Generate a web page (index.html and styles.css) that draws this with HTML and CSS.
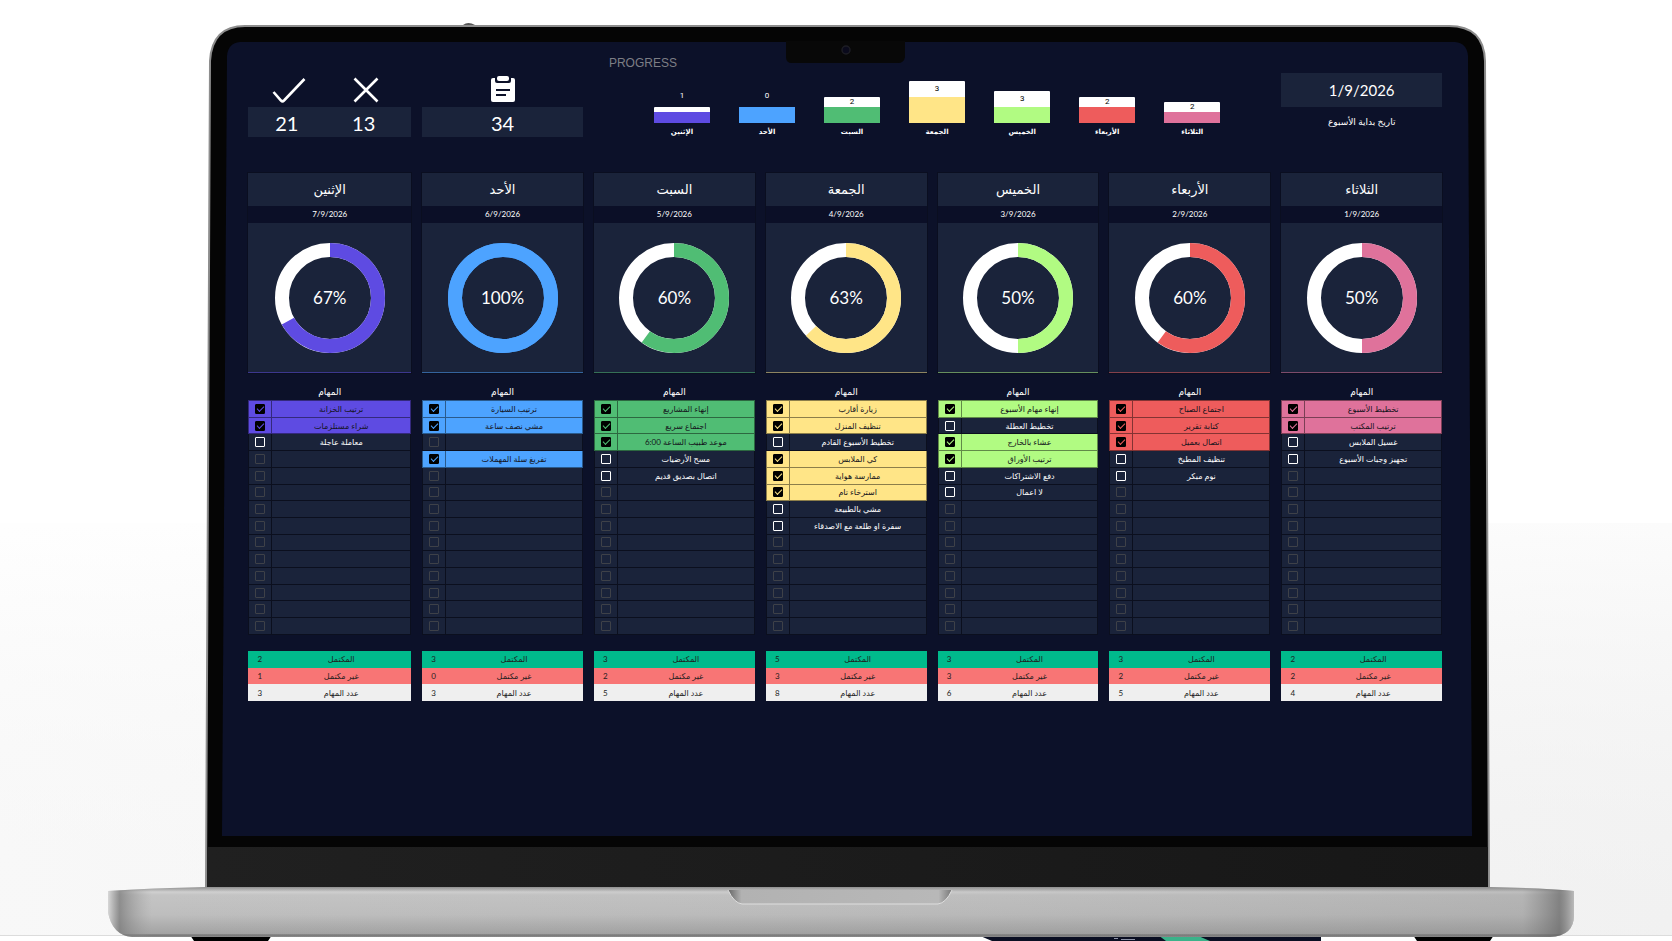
FILE: index.html
```html
<!DOCTYPE html>
<html lang="ar">
<head>
    <meta charset="UTF-8">
    <meta name="viewport" content="width=device-width, initial-scale=1.0">
    <title>Weekly tasks</title>
    <link rel="stylesheet" href="styles.css">
</head>
<body>
    <div class="scene">
        <!-- laptop -->
        <svg class="laptop" viewBox="0 0 1672 941" preserveAspectRatio="none" aria-hidden="true">
            <defs>
                <linearGradient id="wall" x1="0" y1="0" x2="1" y2="0">
                    <stop offset="0" stop-color="#fdfdfd"/>
                    <stop offset="1" stop-color="#f3f3f3"/>
                </linearGradient>
                <linearGradient id="shade" x1="0" y1="0" x2="0" y2="1">
                    <stop offset="0" stop-color="#fff" stop-opacity="0.7"/>
                    <stop offset="1" stop-color="#ececec" stop-opacity="0.3"/>
                </linearGradient>
                <linearGradient id="base" x1="0" y1="0" x2="0" y2="1">
                    <stop offset="0" stop-color="#8f8f8f"/>
                    <stop offset="0.1" stop-color="#d0d0d0"/>
                    <stop offset="0.16" stop-color="#c4c4c4"/>
                    <stop offset="0.55" stop-color="#bebebe"/>
                    <stop offset="0.93" stop-color="#a3a3a3"/>
                    <stop offset="0.96" stop-color="#777"/>
                    <stop offset="1" stop-color="#8c8c8c"/>
                </linearGradient>
                <linearGradient id="ends" x1="0" y1="0" x2="1" y2="0">
                    <stop offset="0" stop-color="#ddd" stop-opacity="0.8"/>
                    <stop offset="0.008" stop-color="#777" stop-opacity="0.7"/>
                    <stop offset="0.03" stop-color="#999" stop-opacity="0"/>
                    <stop offset="0.6" stop-color="#888" stop-opacity="0.1"/>
                    <stop offset="0.965" stop-color="#777" stop-opacity="0.2"/>
                    <stop offset="0.99" stop-color="#666" stop-opacity="0.7"/>
                    <stop offset="1" stop-color="#bbb"/>
                </linearGradient>
                <linearGradient id="strip" x1="0" y1="0" x2="1" y2="0">
                    <stop offset="0" stop-color="#202020"/>
                    <stop offset="1" stop-color="#171717"/>
                </linearGradient>
                <linearGradient id="groove" x1="0" y1="0" x2="1" y2="0">
                    <stop offset="0" stop-color="#666"/>
                    <stop offset="0.06" stop-color="#b2b2b2"/>
                    <stop offset="0.94" stop-color="#b8b8b8"/>
                    <stop offset="1" stop-color="#777"/>
                </linearGradient>
            </defs>
            <rect width="1672" height="941" fill="#fff"/>
            <rect y="523" width="1672" height="412" fill="url(#wall)"/>
            <rect y="523" width="1672" height="412" fill="url(#shade)"/>
            <path d="M0 935.500H1672" stroke="#dcdcdc"/>
            <path d="M463 25q5-4 12 0z" fill="#555"/>
            <path d="M245 26H1449Q1484 26 1485 61L1489 888H206L210 61Q212 26 245 26Z" fill="#050505" stroke="#8d8d8d" stroke-width="2"/>
            <path d="M240 42H1455Q1467 43 1468 56L1472 836H222L227 56Q228 43 240 42Z" fill="#0c1129"/>
            <path d="M786 41H905V57Q904 63 898 63H792Q786 63 786 57Z" fill="#080808"/>
            <circle cx="846" cy="50" r="4" fill="#0a0a1c" stroke="#1d1d24" stroke-width="1.500"/>
            <path d="M207 847H1488V887H207Z" fill="url(#strip)"/>
            <path d="M190 935H272L268 941H194Z M1413 935H1494L1490 941H1417Z" fill="#000"/>
            <path d="M978 935H1321V941H992Z" fill="#0a0e22"/>
            <path d="M1158 935H1196L1210 941H1166Z" fill="#3bb28a"/>
            <path d="M1114 938.500h4m3 1h14" stroke="#8d93a8"/>
            <path d="M108 891Q150 888 206 887H1489Q1540 888 1574 891V915Q1574 936 1550 937H132Q112 935 108 912Z" fill="url(#base)"/>
            <path d="M108 891Q150 888 206 887H1489Q1540 888 1574 891V915Q1574 936 1550 937H132Q112 935 108 912Z" fill="url(#ends)"/>
            <path d="M728 890H952Q946 903 938 904H742Q734 903 728 890Z" fill="url(#groove)"/>
            <path d="M728 890Q734 903 742 904H938Q946 903 952 890" fill="none" stroke="#dedede"/>
        </svg>

        <main class="sheet">
            <header class="top">
                <section class="stat pair">
                    <div class="stat-icons">
                        <svg width="34" height="26" viewBox="0 0 34 26"><path d="M1.500 15L9 23.500Q10.500 25 12 23.500L32.500 2" fill="none" stroke="#fff" stroke-width="2.600"/></svg>
                        <svg width="26" height="26" viewBox="0 0 26 26"><path d="M1.500 1.500L24.500 24.500M24.500 1.500L1.500 24.500" fill="none" stroke="#fff" stroke-width="2.600"/></svg>
                    </div>
                    <div class="stat-box"><span>21</span><span>13</span></div>
                </section>
                <section class="stat">
                    <div class="stat-icons">
                        <svg width="26" height="28" viewBox="0 0 26 28">
                            <path d="M3 3H23Q25 3 25 5V25Q25 27 23 27H3Q1 27 1 25V5Q1 3 3 3Z" fill="#fff"/>
                            <path d="M5 1H21V6Q21 8 19 8H7Q5 8 5 6Z" fill="#0c1129"/>
                            <path d="M7 3Q7 1 9 1H17Q19 1 19 3V4Q19 6 17 6H9Q7 6 7 4Z" fill="#fff"/>
                            <path d="M6 15H20M6 20H16" stroke="#0c1129" stroke-width="2"/>
                        </svg>
                    </div>
                    <div class="stat-box"><span>34</span></div>
                </section>
                <section class="chart">
                    <h2>PROGRESS</h2>
                    <div class="bars" id="bars"></div>
                </section>
                <section class="start">
                    <div class="start-date">1/9/2026</div>
                    <p dir="rtl">تاريخ بداية الأسبوع</p>
                </section>
            </header>
            <div class="week" id="week"></div>
        </main>
    </div>
    <script src="script.js"></script>
</body>
</html>
```
FILE: styles.css
```css
*{
    margin: 0;
    padding: 0;
    box-sizing: border-box;
}
body{
    font-family: Lato, "DejaVu Sans", sans-serif;
    color: #fff;
    background: #fff;
}
.scene{
    position: relative;
    min-height: 100vh;
    overflow: hidden;
}
/* drawn behind the sheet */
.laptop{
    position: absolute;
    left: 0;
    top: 0;
    width: 100%;
    height: 941px;
}
.sheet{
    position: relative;
    padding: 57px 13.75% 0 14.85%;
}
.top, .week{
    display: grid;
    grid-template-columns: 163fr repeat(6, 161fr);
    gap: 11px;
}
.top > *, .week > *{
    min-width: 0;
}
.top{
    margin-bottom: 34px;
}

/* totals */
.stat-icons{
    display: flex;
    justify-content: space-around;
    align-items: flex-end;
    height: 46px;
}
.stat-box{
    display: flex;
    justify-content: space-around;
    margin-top: 4px;
    background: #1a233a;
    font-size: 20px;
    line-height: 32px;
    height: 30px;
}
.pair .stat-icons, .pair .stat-box{
    padding-right: 9px;
}

/* chart */
.chart{
    grid-column: span 4;
}
.chart h2{
    padding-left: 15px;
    font: 12px/13px "Liberation Sans", Arial, sans-serif;
    color: #7d7e85;
}
.bars{
    display: flex;
    gap: 29px;
    padding: 0 50px 0 60px;
}
.bar-item{
    flex: 1;
    text-align: center;
}
.plot{
    display: flex;
    flex-direction: column;
    justify-content: flex-end;
    height: 53px;
}
.plot .num{
    font: 8px/12px Roboto, sans-serif;
    margin-bottom: 5px;
}
.left{
    display: flex;
    justify-content: center;
    align-items: center;
    background: #fff;
    color: #000;
    border-radius: 1px 1px 0 0;
}
.left .num{
    margin: 0;
}
.done{
    background: var(--c);
}
.bar-name{
    margin-top: 3px;
    font: bold 7px/13px "DejaVu Sans", sans-serif;
}

/* start of the week */
.start{
    padding-top: 16px;
    text-align: center;
}
.start-date{
    background: #1a233a;
    font-size: 15px;
    line-height: 34px;
}
.start p{
    margin-top: 7px;
    font-size: 9px;
    line-height: 16px;
}

/* day columns */
.card{
    text-align: center;
    background: #1a233a;
    border-bottom: 1px solid color-mix(in srgb, var(--c) 50%, #1a233a);
    box-shadow: 0 0 0 1px #0a0e20;
}
.card h3{
    font-size: 13px;
    line-height: 33px;
    font-weight: normal;
}
.card .date{
    background: #0b0f27;
    font-size: 8px;
    line-height: 17px;
}
.ring{
    display: grid;
    place-items: center;
    height: 149px;
}
.ring svg, .ring span{
    grid-area: 1 / 1;
}
.ring circle{
    fill: none;
    stroke: #fff;
    stroke-width: 14;
}
.ring .value{
    stroke: var(--c);
}
.ring span{
    font-size: 17px;
}
table{
    width: 100%;
    border-collapse: collapse;
    table-layout: fixed;
}
.tasks{
    height: 235px;
    margin-top: 11px;
    font-size: 8px;
    line-height: 12px;
}
.tasks caption{
    font-size: 9px;
    line-height: 16px;
}
.tasks tr{
    height: 16px;
}
.tasks td{
    text-align: center;
    white-space: nowrap;
    background: #1a233a;
    border: 1px solid #0b0f1e;
}
.tasks td:first-child, .summary td{
    width: 23px;
}
.tasks label{
    display: block;
}
.tasks input{
    display: block;
    appearance: none;
    width: 10px;
    height: 10px;
    margin: 0 auto;
    border: 1px solid #3e4148;
    border-radius: 1px;
}
.tasks .open input{
    border-color: #fff;
}
.tasks .checked td{
    color: #14141c;
    background: var(--c);
    border-color: color-mix(in srgb, var(--c) 55%, #000);
}
.tasks .checked input{
    background: #000;
    border-color: #000;
}
.tasks .checked input::after{
    content: "";
    display: block;
    width: 6px;
    height: 3px;
    margin: 1px;
    border: solid var(--c);
    border-width: 0 0 1px 1px;
    transform: rotate(-45deg);
}
.summary{
    height: 50px;
    margin-top: 16px;
    color: #1d1d1d;
    font-size: 8px;
    line-height: 12px;
}
.summary th{
    font-weight: normal;
}
.summary td{
    text-align: center;
}
.sum-done{
    background: #00ba8c;
}
.sum-open{
    background: #f87575;
}
.sum-all{
    background: #efefef;
}
```
FILE: script.js
```javascript
// tasks: [text, checked], an empty text is a free row
var ROWS = 14;
var days = [
    {name: 'الإثنين', date: '7/9/2026', color: '#5e4be2', tasks: [
        ['ترتيب الخزانة', 1], ['شراء مستلزمات', 1], ['معاملة عاجلة', 0]]},
    {name: 'الأحد', date: '6/9/2026', color: '#4da3ff', tasks: [
        ['ترتيب السيارة', 1], ['مشي نصف ساعة', 1], ['', 0], ['تفريغ سلة المهملات', 1]]},
    {name: 'السبت', date: '5/9/2026', color: '#50bd74', tasks: [
        ['إنهاء المشاريع', 1], ['اجتماع سريع', 1], ['موعد طبيب الساعة 6:00', 1],
        ['مسح الأرضيات', 0], ['اتصال بصديق قديم', 0]]},
    {name: 'الجمعة', date: '4/9/2026', color: '#ffe587', tasks: [
        ['زيارة أقارب', 1], ['تنظيف المنزل', 1], ['تخطيط الأسبوع القادم', 0],
        ['كي الملابس', 1], ['ممارسة هواية', 1], ['استرخاء تام', 1],
        ['مشي بالطبيعة', 0], ['سفرة او طلعة مع الاصدقاء', 0]]},
    {name: 'الخميس', date: '3/9/2026', color: '#b1fb82', tasks: [
        ['إنهاء مهام الأسبوع', 1], ['تخطيط العطلة', 0], ['عشاء بالخارج', 1],
        ['ترتيب الأوراق', 1], ['دفع الاشتراكات', 0], ['لا اعمال', 0]]},
    {name: 'الأربعاء', date: '2/9/2026', color: '#ee5c5c', tasks: [
        ['اجتماع الصباح', 1], ['كتابة تقرير', 1], ['اتصال بعميل', 1],
        ['تنظيف المطبخ', 0], ['نوم مبكر', 0]]},
    {name: 'الثلاثاء', date: '1/9/2026', color: '#df729b', tasks: [
        ['تخطيط الأسبوع', 1], ['ترتيب المكتب', 1], ['غسيل الملابس', 0],
        ['تجهيز وجبات الأسبوع', 0]]}
];

function barHtml(day, done, left){
    var num = '<div class="num">' + left + '</div>';
    var html = '<div class="bar-item" style="--c:' + day.color + '"><div class="plot">';
    if(left < 2){
        html += num;
    }
    html += '<div class="left" style="height:' + left * 10 + '%">' + (left < 2 ? '' : num) + '</div>';
    html += '<div class="done" style="height:' + done * 10 + '%"></div></div>';
    return html + '<div class="bar-name">' + day.name + '</div></div>';
}

function dayHtml(day, d, done, left){
    var percent = Math.round(done / (done + left) * 100);
    var html = '<section style="--c:' + day.color + '"><div class="card">' +
        '<h3>' + day.name + '</h3><div class="date">' + day.date + '</div>' +
        '<div class="ring"><svg width="110" height="110" viewBox="0 0 110 110">' +
        '<circle cx="55" cy="55" r="48"' + (percent == 100 ? ' class="value"' : '') + '/>' +
        '<circle class="value" cx="55" cy="55" r="48" pathLength="100" transform="rotate(-90 55 55)" stroke-dasharray="' + percent + ' 100"/>' +
        '</svg><span>' + percent + '%</span></div></div>' +
        '<table class="tasks"><caption>المهام</caption>';
    for(var i=0; i<ROWS; i++){
        var task = day.tasks[i] || ['', 0];
        var id = 'task-' + d + '-' + i;
        var cls = task[1] ? 'checked' : (task[0] ? 'open' : '');
        html += '<tr class="' + cls + '"><td><input type="checkbox" id="' + id + '"' +
            (task[1] ? ' checked' : '') + (task[0] ? '' : ' aria-label="مهمة"') + '></td>' +
            '<td colspan="6" dir="rtl">' + (task[0] ? '<label for="' + id + '">' + task[0] + '</label>' : '') + '</td></tr>';
    }
    html += '</table><table class="summary">' +
        '<tr class="sum-done"><td>' + done + '</td><th>المكتمل</th></tr>' +
        '<tr class="sum-open"><td>' + left + '</td><th>غير مكتمل</th></tr>' +
        '<tr class="sum-all"><td>' + (done + left) + '</td><th>عدد المهام</th></tr></table>';
    return html + '</section>';
}

var bars = '';
var week = '';
for(var d=0; d<days.length; d++){
    var done = 0;
    var left = 0;
    days[d].tasks.forEach(function(task){
        if(task[1]){
            done++;
        }else if(task[0]){
            left++;
        }
    });
    bars += barHtml(days[d], done, left);
    week += dayHtml(days[d], d, done, left);
}
document.getElementById('bars').innerHTML = bars;
document.getElementById('week').innerHTML = week;
```
